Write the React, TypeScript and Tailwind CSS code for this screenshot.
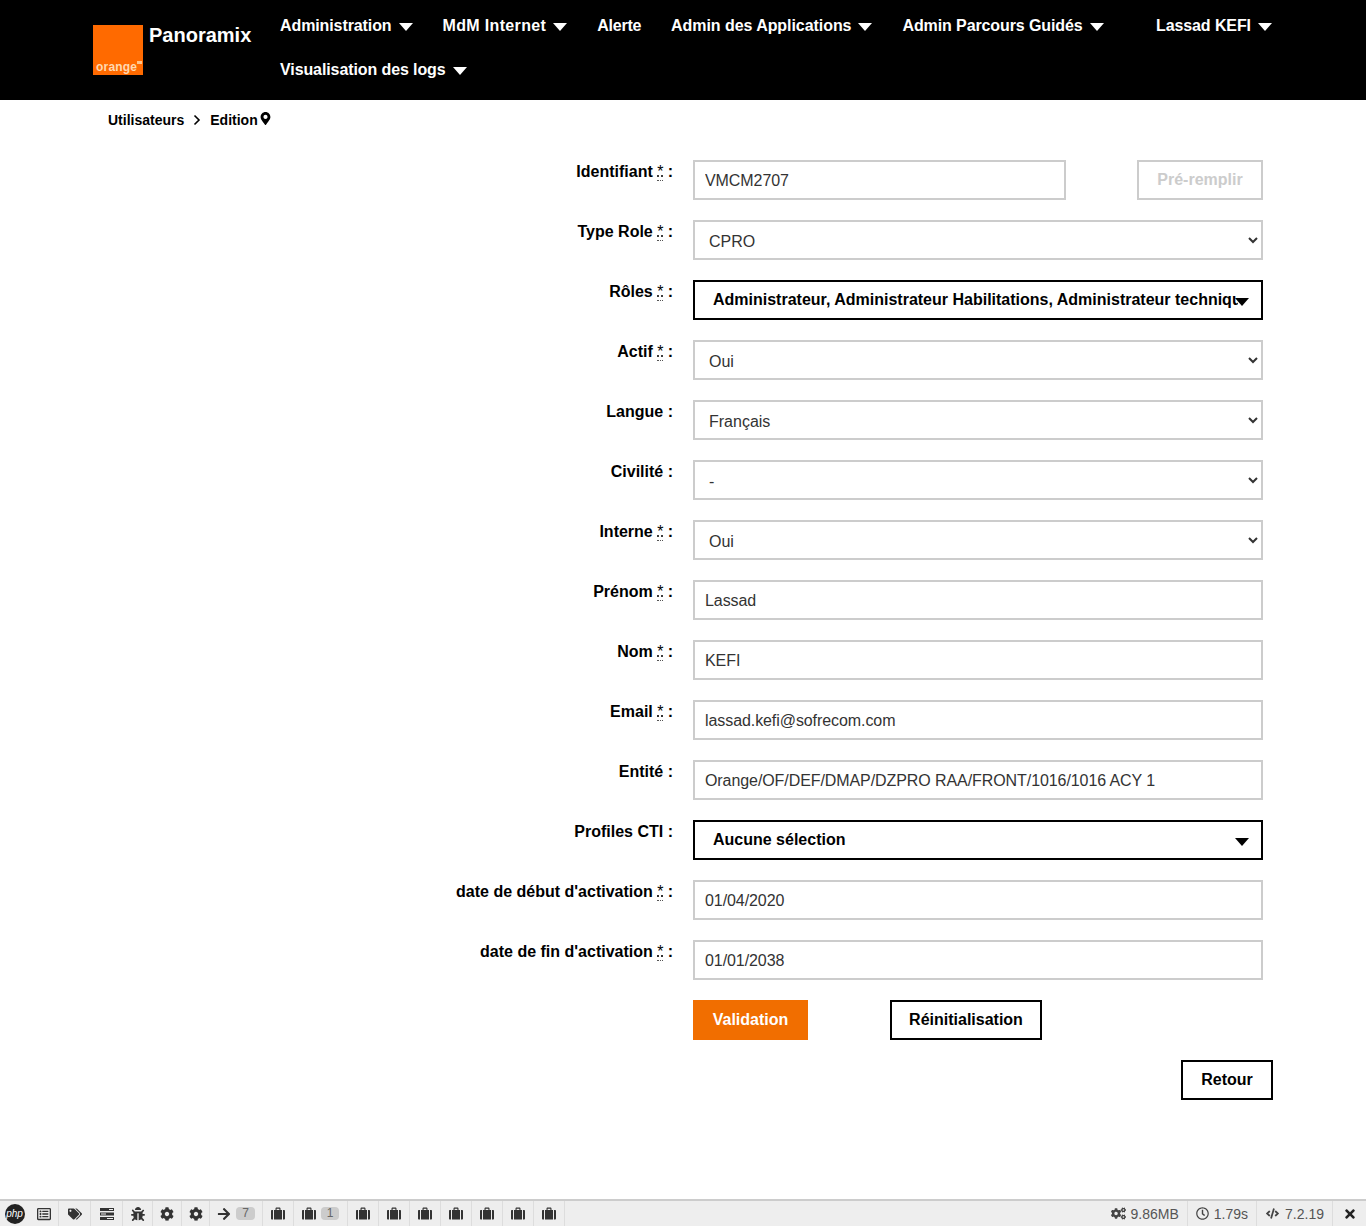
import type { ReactNode } from "react";
import {
  FaArrowRight,
  FaBug,
  FaCode,
  FaCog,
  FaCogs,
  FaMapMarkerAlt,
  FaRegClock,
  FaRegListAlt,
  FaTags,
  FaTimes,
} from "react-icons/fa";

function Caret() {
  return <span className="ml-[7px] mt-[1px] h-0 w-0 border-x-[7.5px] border-t-[8px] border-x-transparent border-t-white" />;
}

function NavItem({ label, caret = true, tracking = "tracking-[-0.1px]" }: { label: string; caret?: boolean; tracking?: string }) {
  return (
    <a className={`flex h-11 items-center whitespace-nowrap px-[15px] leading-6 font-bold text-white ${tracking}`}>
      {label}
      {caret && <Caret />}
    </a>
  );
}

function Req() {
  return (
    <>
      <abbr className="inline-block h-[21px] w-[6px] border-b border-dotted border-[#555] text-center font-normal underline underline-offset-[-1px]" title="requis">*</abbr>
      {" "}
    </>
  );
}

function Row({ label, required, children }: { label: string; required?: boolean; children: ReactNode }) {
  return (
    <div className="mb-5 flex h-10">
      <label className="w-[580px] text-right leading-6 font-bold text-black">
        {label} {required && <Req />}:
      </label>
      <div className="ml-5 flex w-[570px]">{children}</div>
    </div>
  );
}

function TextInput({ value, className = "w-full" }: { value: string; className?: string }) {
  return (
    <input
      readOnly
      value={value}
      className={`h-10 border-2 border-[#ccc] px-[10px] pt-[2px] tracking-[-0.08px] text-[#333] outline-none ${className}`}
    />
  );
}

function Select({ value }: { value: string }) {
  return (
    <select defaultValue={value} className="h-10 w-full border-2 border-[#ccc] bg-white px-[10px] pt-[2px] text-[#333] outline-none">
      <option>{value}</option>
    </select>
  );
}

function MultiSelect({ value }: { value: string }) {
  return (
    <div className="relative h-10 w-full border-2 border-black">
      <div className="mr-[23px] h-full overflow-hidden pl-[18px] leading-[35px] font-bold whitespace-nowrap text-black">
        {value}
      </div>
      <span className="absolute top-4 right-[12px] h-0 w-0 border-x-[7.5px] border-t-[8px] border-x-transparent border-t-black" />
    </div>
  );
}

function Briefcase() {
  return (
    <svg width="14" height="13" viewBox="0 0 14 13" fill="#333">
      <path d="M4.5 3V1.600C4.500 1 5 .5 5.600.5h2.800c.6 0 1.100.5 1.100 1.100V3H8.400V1.700H5.600V3z" />
      <path d="M3 3h8v9.500H3zM0 4c0-.6.4-1 1-1h1v9.500H1c-.6 0-1-.4-1-1zM12 3h1c.6 0 1 .4 1 1v7.500c0 .6-.4 1-1 1h-1z" />
    </svg>
  );
}

function ServerBars() {
  return (
    <svg width="14" height="12" viewBox="0 0 14 12" fill="#333">
      <path d="M0 0h14v3H0zM0 4.500h14v3H0zM0 9h14v3H0z" />
      <path d="M9 1h4v1H9zM1 5.500h5v1H1zM7 10h6v1H7z" fill="#eee" />
    </svg>
  );
}

const tabs: { icon: ReactNode; badge?: string; w: string }[] = [
  { icon: <FaRegListAlt />, w: "w-[30px]" },
  { icon: <FaTags />, w: "w-[32px]" },
  { icon: <ServerBars />, w: "w-[32px]" },
  { icon: <FaBug />, w: "w-[30px]" },
  { icon: <FaCog />, w: "w-[29px]" },
  { icon: <FaCog />, w: "w-[28px]" },
  { icon: <FaArrowRight />, badge: "7", w: "w-[53px]" },
  { icon: <Briefcase />, w: "w-[31px]" },
  { icon: <Briefcase />, badge: "1", w: "w-[54px]" },
  { icon: <Briefcase />, w: "w-[31px]" },
  { icon: <Briefcase />, w: "w-[31px]" },
  { icon: <Briefcase />, w: "w-[31px]" },
  { icon: <Briefcase />, w: "w-[31px]" },
  { icon: <Briefcase />, w: "w-[31px]" },
  { icon: <Briefcase />, w: "w-[31px]" },
  { icon: <Briefcase />, w: "w-[31px]" },
];

function DebugBar() {
  return (
    <div className="mt-auto flex h-[27px] items-stretch border-t-2 border-[#ccc] bg-[#eee] font-['Liberation_Sans',sans-serif] text-sm text-[#555]">
      <div className="flex w-[29px] items-center justify-center">
        <span className="flex h-[20px] w-[20px] items-center justify-center rounded-full bg-[#222] text-[10px] leading-none text-white italic">php</span>
      </div>
      {tabs.map((t, i) => (
        <div key={i} className={`flex items-center justify-center gap-[5px] border-r border-[#ddd] text-[#333] ${t.w}`}>
          {t.icon}
          {t.badge && <span className="rounded-[4px] bg-[#ccc] px-[6px] text-xs leading-[13px] text-[#666]">{t.badge}</span>}
        </div>
      ))}
      <div className="ml-auto flex items-center gap-[5px] border-r border-[#ddd] pr-[8px]"><FaCogs className="text-[15px] text-[#444]" />9.86MB</div>
      <div className="flex items-center gap-[5px] border-r border-[#ddd] px-[8px]"><FaRegClock className="text-[13px] text-[#444]" />1.79s</div>
      <div className="flex items-center gap-[6px] border-r border-[#ddd] pl-[9px] pr-[8px]"><FaCode className="text-[13px] text-[#444]" />7.2.19</div>
      <div className="flex w-[33px] items-center justify-center text-[#222]"><FaTimes /></div>
    </div>
  );
}

export default function App() {
  return (
    <div className="flex h-screen flex-col bg-white font-['Liberation_Sans',Arial,sans-serif] text-base">
      <header className="h-[100px] bg-black">
        <div className="mx-auto flex w-[1180px] pt-1">
          <div className="relative mt-[21px] h-[50px] w-[50px] shrink-0 bg-[#ff6a00]">
            <span className="absolute bottom-[1px] left-[3px] text-[12px] leading-[14px] font-bold tracking-[0.2px] text-[#ffd9b0]">orange</span>
            <span className="absolute right-[1px] bottom-[11px] h-[3px] w-[5px] bg-[#ffc48a]" />
          </div>
          <div className="ml-[6px] mt-[18px] w-[116px] shrink-0 text-xl leading-[26px] font-bold text-white">Panoramix</div>
          <nav className="flex w-[876px] shrink-0 flex-wrap">
            <NavItem label="Administration" />
            <NavItem label="MdM Internet" tracking="tracking-[0.35px]" />
            <NavItem label="Alerte" caret={false} tracking="tracking-[-0.25px]" />
            <NavItem label="Admin des Applications" tracking="tracking-[-0.06px]" />
            <NavItem label="Admin Parcours Guidés" />
            <NavItem label="Visualisation des logs" />
          </nav>
          <div className="shrink-0"><NavItem label="Lassad KEFI" /></div>
        </div>
      </header>

      <main className="mx-auto w-[1180px]">
        <div className="flex h-10 items-center pl-[15px] text-sm font-bold text-black">
          Utilisateurs
          <svg width="8" height="12" viewBox="0 0 8 12" className="mx-[9px]" fill="none" stroke="currentColor" strokeWidth="1.6"><path d="M1.500 1.500 6 6l-4.500 4.500" /></svg>
          Edition
          <FaMapMarkerAlt className="mb-[3px] ml-[1px] text-[13px]" />
        </div>

        <form className="mt-5">
          <Row label="Identifiant" required>
            <TextInput value="VMCM2707" className="w-[373px]" />
            <button type="button" disabled className="ml-auto h-10 w-[126px] border-2 border-[#ccc] font-bold text-[#ccc]">Pré-remplir</button>
          </Row>
          <Row label="Type Role" required><Select value="CPRO" /></Row>
          <Row label="Rôles" required><MultiSelect value="Administrateur, Administrateur Habilitations, Administrateur technique" /></Row>
          <Row label="Actif" required><Select value="Oui" /></Row>
          <Row label="Langue"><Select value="Français" /></Row>
          <Row label="Civilité"><Select value="-" /></Row>
          <Row label="Interne" required><Select value="Oui" /></Row>
          <Row label="Prénom" required><TextInput value="Lassad" /></Row>
          <Row label="Nom" required><TextInput value="KEFI" /></Row>
          <Row label="Email" required><TextInput value="lassad.kefi@sofrecom.com" /></Row>
          <Row label="Entité"><TextInput value="Orange/OF/DEF/DMAP/DZPRO RAA/FRONT/1016/1016 ACY 1" /></Row>
          <Row label="Profiles CTI"><MultiSelect value="Aucune sélection" /></Row>
          <Row label="date de début d'activation" required><TextInput value="01/04/2020" /></Row>
          <Row label="date de fin d'activation" required><TextInput value="01/01/2038" /></Row>
          <div className="mb-5 flex h-10 pl-[600px]">
            <button type="button" className="h-10 w-[115px] bg-[#f16e00] font-bold text-white">Validation</button>
            <button type="button" className="ml-[82px] h-10 w-[152px] border-2 border-black font-bold text-black">Réinitialisation</button>
          </div>
          <div className="flex justify-end">
            <button type="button" className="h-10 w-[92px] border-2 border-black font-bold text-black">Retour</button>
          </div>
        </form>
      </main>

      <DebugBar />
    </div>
  );
}
